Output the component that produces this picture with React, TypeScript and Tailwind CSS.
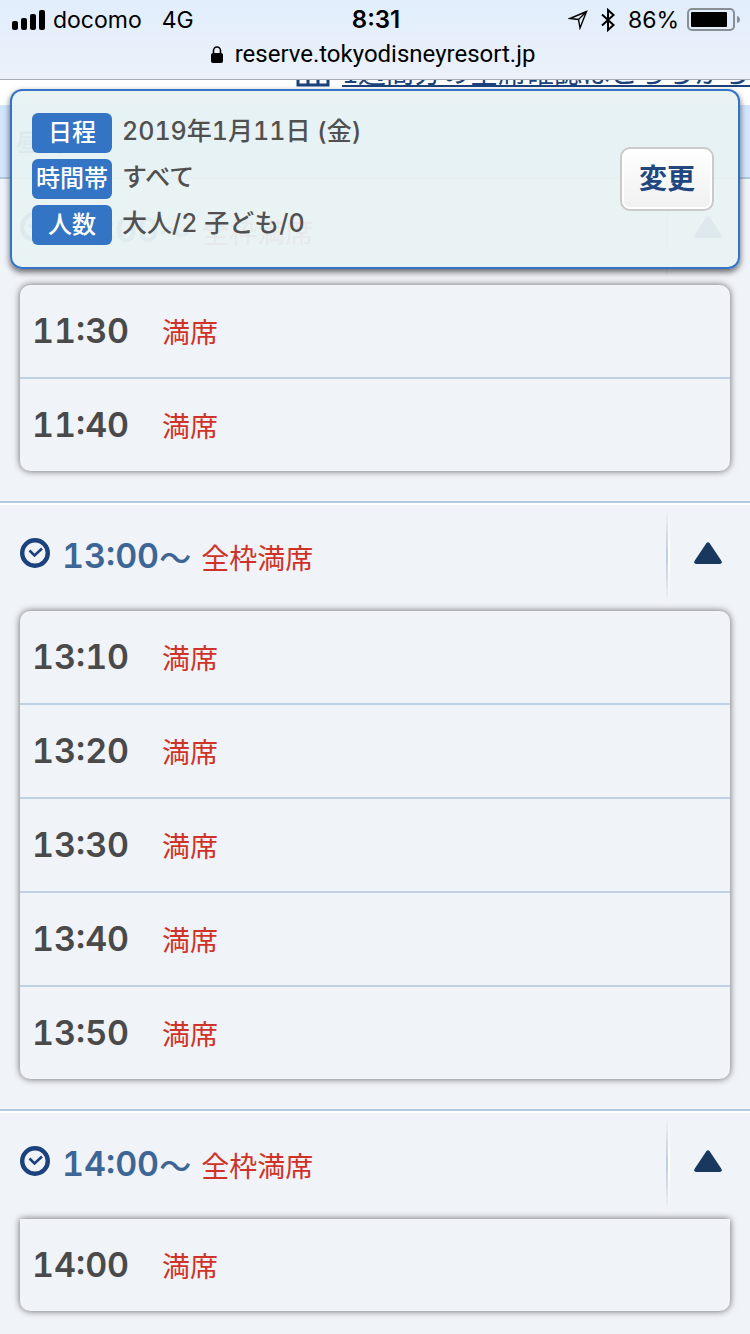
type Group = {
  start: string;
  slots: string[];
  flatTop?: boolean;
};

const groups: Group[] = [
  { start: '11:00', slots: ['11:30', '11:40'] },
  { start: '13:00', slots: ['13:10', '13:20', '13:30', '13:40', '13:50'] },
  { start: '14:00', slots: ['14:00'], flatTop: true },
];

const conditions = [
  { label: '日程', value: '2019年1月11日 (金)' },
  { label: '時間帯', value: 'すべて' },
  { label: '人数', value: '大人/2 子ども/0' },
];

function StatusBar() {
  return (
    <header className="relative z-20 h-20 border-b border-[#a9adb3] bg-linear-to-b from-[#e1eefc] to-[#ecf1f9] font-['Inter','Noto_Sans_CJK_JP',sans-serif] text-black">
      <div className="grid h-10 grid-cols-3 items-center pr-2.5 pl-3 text-[23px]">
        <div className="flex items-center gap-2">
          <svg className="h-5 w-[33px]" viewBox="0 0 33 20" aria-hidden="true">
            <rect x="0" y="11" width="6" height="9" rx="2" />
            <rect x="9" y="8" width="6" height="12" rx="2" />
            <rect x="18" y="4" width="6" height="16" rx="2" />
            <rect x="27" y="0" width="6" height="20" rx="2" />
          </svg>
          <span>docomo</span>
          <span className="ml-3">4G</span>
        </div>
        <div className="text-center text-2xl font-semibold">8:31</div>
        <div className="flex items-center justify-end">
          <svg className="mr-3 h-5 w-5" viewBox="0 0 20 20" fill="none" stroke="currentColor" strokeWidth="1.4" aria-hidden="true">
            <path d="M18.500 1.500 L2 8.500 L10.500 9.500 L12 18 Z M18.500 1.500 L10.500 9.500" />
          </svg>
          <svg className="mr-3 h-6 w-4" viewBox="0 0 16 24" fill="none" stroke="currentColor" strokeWidth="2" aria-hidden="true">
            <path d="M2 6.500 L13.500 17 L8 22 V2 L13.500 7 L2 17.500" />
          </svg>
          <span className="mr-2">86%</span>
          <svg className="h-6 w-[53px]" viewBox="0 0 53 24" aria-hidden="true">
            <rect x="1" y="1" width="46" height="21" rx="4" fill="none" stroke="#8a8f96" strokeWidth="2" />
            <rect x="4" y="4" width="36" height="15" rx="1" />
            <path d="M50 8 Q53 9 53 11.500 Q53 14 50 15 Z" fill="#8a8f96" />
          </svg>
        </div>
      </div>
      <div className="flex items-center justify-center gap-3 pr-1 font-['Roboto',sans-serif] text-2xl leading-7">
        <svg className="h-[17px] w-3" viewBox="0 0 12 17" aria-hidden="true">
          <rect x="0" y="7" width="12" height="10" rx="2" />
          <path d="M2.500 8 V4.500 a3.500 3.500 0 0 1 7 0 V8" fill="none" stroke="currentColor" strokeWidth="1.600" />
        </svg>
        <span>reserve.tokyodisneyresort.jp</span>
      </div>
    </header>
  );
}

function ConditionPanel() {
  return (
    <section className="absolute inset-x-2.5 top-[89px] z-10 flex h-[180px] items-center justify-between rounded-xl border-2 border-[#3474c6] bg-[#e8f2f3]/95 pr-6 pl-5 shadow-[0_3px_6px_rgba(0,0,0,0.6)]">
      <dl className="flex flex-col gap-1.5">
        {conditions.map((c) => (
          <div key={c.label} className="flex h-10 items-center gap-2.5">
            <dt className="flex h-10 w-20 items-center justify-center rounded-md bg-[#3474c4] pb-1 text-2xl font-medium text-white">
              {c.label}
            </dt>
            <dd className="pb-1 font-['Inter','Noto_Sans_CJK_JP',sans-serif] text-[25px] leading-9 font-medium text-[#505050] tabular-nums">
              {c.value}
            </dd>
          </div>
        ))}
      </dl>
      <button
        type="button"
        className="h-16 w-[94px] rounded-[10px] border-2 border-[#cacaca] bg-linear-to-b from-white to-[#f0f0f0] pb-1 text-[28px] font-bold text-[#22477f] shadow-[inset_0_0_0_2px_#fff]"
      >
        変更
      </button>
    </section>
  );
}

function GroupHeading({ start }: { start: string }) {
  return (
    <button type="button" className="flex h-[106px] w-full items-center pb-1 pl-5 text-left">
      <svg className="mb-1.5 h-[30px] w-[30px]" viewBox="0 0 30 30" fill="none" stroke="#1b427c" aria-hidden="true">
        <circle cx="15" cy="15" r="12.8" strokeWidth="4.400" />
        <path d="M9.500 12.500 L14.500 17.500 L22 10.500" strokeWidth="2.600" />
      </svg>
      <span className="ml-3 flex items-center text-[#3d6696]">
        <span className="font-['Inter',sans-serif] text-[34px] leading-none font-semibold tabular-nums">{start}</span>
        <span className="text-[32px] leading-none font-medium">〜</span>
      </span>
      <span className="ml-2.5 pt-0.5 text-[28px] text-[#cf3328]">全枠満席</span>
      <span className="ml-auto flex h-24 w-[84px] items-center justify-center">
        <span className="h-24 w-0.5 bg-linear-to-b from-transparent via-[#bccde0] to-transparent" />
        <span className="h-24 w-0.5 bg-linear-to-b from-transparent via-white to-transparent" />
        <span className="flex flex-1 justify-center pr-1 pb-1.5">
          <svg className="h-[22px] w-7" viewBox="0 0 28 22" fill="#18385f" aria-hidden="true">
            <path d="M12.500 1 Q14 -0.500 15.500 1 L27.500 19 Q28.500 21.500 26 22 H2 Q-0.500 21.500 0.500 19 Z" />
          </svg>
        </span>
      </span>
    </button>
  );
}

function SlotList({ slots, flatTop }: { slots: string[]; flatTop?: boolean }) {
  return (
    <ul
      className={`mx-5 divide-y-2 divide-[#bfd0e2] bg-[#f0f3f8] shadow-[0_0_7px_rgba(0,0,0,0.6)] ${
        flatTop ? 'rounded-b-[10px]' : 'rounded-[10px]'
      }`}
    >
      {slots.map((slot) => (
        <li key={slot} className="flex items-center pl-3 leading-[92px]">
          <span className="w-[130px] font-['Inter',sans-serif] text-[34px] font-semibold text-[#4a4a4a] tabular-nums">{slot}</span>
          <span className="text-[28px] text-[#cf3328]">満席</span>
        </li>
      ))}
    </ul>
  );
}

export default function App() {
  return (
    <div className="relative min-h-screen overflow-hidden bg-[#f0f3f8] font-['Noto_Sans_CJK_JP',sans-serif]">
      <StatusBar />
      <ConditionPanel />
      <main>
        <div className="flex h-[25px] items-end justify-end overflow-hidden bg-white pb-[18px] whitespace-nowrap">
          <svg className="mr-3 h-[30px] w-[34px] shrink-0" viewBox="0 0 34 30" fill="none" stroke="#1b427c" strokeWidth="3" aria-hidden="true">
            <path d="M2 2 H32 V28 H2 Z M12 2 V28 M22 2 V28 M2 15 H32" />
          </svg>
          <a href="#week" className="border-b-2 border-[#1b427c] text-[28px] leading-7 text-[#1b427c]">
            1週間分の全席確認はこちらから
          </a>
        </div>
        <h2 className="flex h-[74px] items-center border-b-2 border-[#b3c8de] bg-[#d3e5fc] pl-4 text-2xl font-bold text-[#22477f]">
          昼食
        </h2>
        {groups.map((group, i) => (
          <section key={group.start} className={i > 0 ? 'mt-[30px] border-t-2 border-[#b3c8de]' : ''}>
            <div className={i > 0 ? 'border-t-2 border-white' : ''}>
              <GroupHeading start={group.start} />
            </div>
            <SlotList slots={group.slots} flatTop={group.flatTop} />
          </section>
        ))}
      </main>
    </div>
  );
}
